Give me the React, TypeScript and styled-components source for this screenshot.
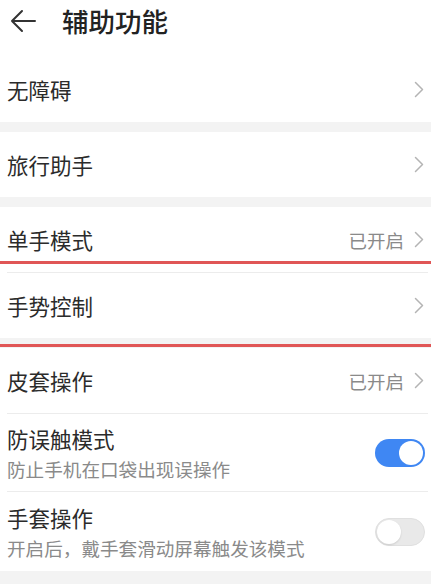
import React from "react";
import styled, { createGlobalStyle } from "styled-components";

const GlobalStyle = createGlobalStyle`
  html, body { margin: 0; padding: 0; background: #ffffff; }
  body { font-family: "Noto Sans CJK SC", "Noto Sans", sans-serif; }
  * { box-sizing: border-box; }
`;

const Page = styled.div`
  width: 431px;
  background: #ffffff;
  display: flex;
  flex-direction: column;
`;

const Header = styled.header`
  height: 57px;
  display: flex;
  align-items: flex-start;
  padding: 7px 0 0 10px;
  gap: 26px;
`;

const BackButton = styled.div`
  width: 26px;
  height: 28px;
  display: flex;
  align-items: center;
  justify-content: center;
`;

const Title = styled.h1`
  margin: 0;
  font-size: 26.5px;
  line-height: 28px;
  font-weight: 500;
  color: #222222;
`;

const Band = styled.div<{ $h?: number }>`
  position: relative;
  height: ${(p) => p.$h ?? 10}px;
  background: #f3f3f3;
`;

const Group = styled.section`
  display: flex;
  flex-direction: column;
  background: #ffffff;
`;

const Row = styled.div<{ $h: number }>`
  position: relative;
  height: ${(p) => p.$h}px;
  display: flex;
  align-items: center;
  justify-content: space-between;
  padding: 0 7px 0 7px;
`;

const Divider = styled.div`
  height: 1px;
  margin: 0 3px 0 7px;
  background: #ececec;
`;

const Texts = styled.div`
  display: flex;
  flex-direction: column;
  gap: 5px;
`;

const Label = styled.span`
  font-size: 21.5px;
  line-height: 26px;
  color: #2b2b2b;
`;

const Sub = styled.span`
  font-size: 18.6px;
  line-height: 23px;
  color: #8a8a8a;
`;

const Trail = styled.div`
  display: flex;
  align-items: center;
  gap: 10px;
`;

const Status = styled.span`
  font-size: 18.5px;
  line-height: 24px;
  color: #8a8a8a;
`;

const Annotation = styled.div<{ $bottom: number }>`
  position: absolute;
  left: 0;
  right: 0;
  bottom: ${(p) => p.$bottom}px;
  height: 3px;
  background: #e05656;
`;

const Switch = styled.div<{ $on: boolean }>`
  position: relative;
  width: 50px;
  height: 28px;
  border-radius: 14px;
  margin-right: -1px;
  background: ${(p) => (p.$on ? "#3f87f3" : "#e9e9e9")};
  border: ${(p) => (p.$on ? "none" : "1px solid #e0e0e0")};
`;

const Thumb = styled.div<{ $on: boolean }>`
  position: absolute;
  top: ${(p) => (p.$on ? 2 : 1)}px;
  left: ${(p) => (p.$on ? 24 : 1)}px;
  width: 24px;
  height: 24px;
  border-radius: 50%;
  background: #ffffff;
  box-shadow: ${(p) => (p.$on ? "none" : "0 1px 2px rgba(0,0,0,0.12)")};
`;

const Chevron = () => (
  <svg width="10" height="17" viewBox="0 0 10 17" fill="none">
    <path d="M1.5 1.5 L8.5 8.5 L1.5 15.5" stroke="#b4b4b4" strokeWidth="1.5" strokeLinecap="round" strokeLinejoin="round" />
  </svg>
);

const BackArrow = () => (
  <svg width="26" height="24" viewBox="0 0 26 24" fill="none">
    <path d="M2 12 H25 M12 2 L2 12 L12 22" stroke="#333333" strokeWidth="2" strokeLinecap="round" strokeLinejoin="round" />
  </svg>
);

const NavRow = ({ label, status, h = 65, children }: { label: string; status?: string; h?: number; children?: React.ReactNode }) => (
  <Row $h={h}>
    <Label>{label}</Label>
    <Trail>
      {status && <Status>{status}</Status>}
      <Chevron />
    </Trail>
    {children}
  </Row>
);

const ToggleRow = ({ label, sub, on, h }: { label: string; sub: string; on: boolean; h: number }) => (
  <Row $h={h}>
    <Texts>
      <Label>{label}</Label>
      <Sub>{sub}</Sub>
    </Texts>
    <Switch $on={on}>
      <Thumb $on={on} />
    </Switch>
  </Row>
);

export default function App() {
  return (
    <Page>
      <GlobalStyle />
      <Header>
        <BackButton>
          <BackArrow />
        </BackButton>
        <Title>辅助功能</Title>
      </Header>
      <Group>
        <NavRow label="无障碍" h={65} />
      </Group>
      <Band />
      <Group>
        <NavRow label="旅行助手" h={65} />
      </Group>
      <Band />
      <Group>
        <NavRow label="单手模式" status="已开启" h={65}>
          <Annotation $bottom={8} />
        </NavRow>
        <Divider />
        <NavRow label="手势控制" h={65} />
      </Group>
      <Band>
        <Annotation $bottom={1} />
      </Band>
      <Group>
        <NavRow label="皮套操作" status="已开启" h={65} />
        <Divider />
        <ToggleRow label="防误触模式" sub="防止手机在口袋出现误操作" on={true} h={77} />
        <Divider />
        <ToggleRow label="手套操作" sub="开启后，戴手套滑动屏幕触发该模式" on={false} h={79} />
      </Group>
      <Band $h={20} />
    </Page>
  );
}
